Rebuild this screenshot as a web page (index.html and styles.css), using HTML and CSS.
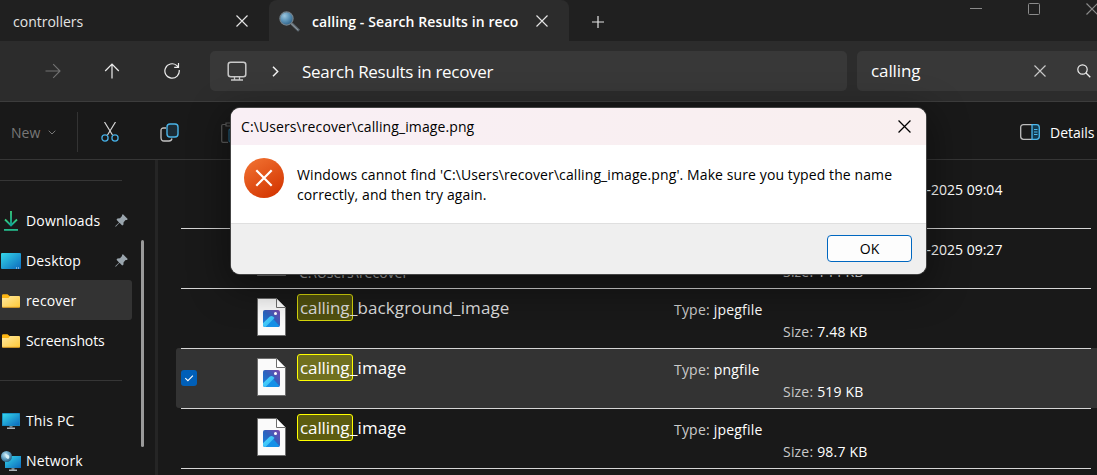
FILE: index.html
```html
<!DOCTYPE html>
<html lang="en">
<head>
<meta charset="utf-8">
<title>calling - Search Results in recover</title>
<link rel="stylesheet" href="styles.css">
</head>
<body>
<svg class="defs" width="0" height="0" aria-hidden="true">
  <defs>
    <linearGradient id="screen" x1="0" y1="0" x2="1" y2="1"><stop offset="0" stop-color="#35d7ea"/><stop offset="1" stop-color="#0c69bd"/></linearGradient>
    <linearGradient id="folder" x1="0" y1="0" x2="1" y2="1"><stop offset="0" stop-color="#ffe9a0"/><stop offset="1" stop-color="#ffc938"/></linearGradient>
    <linearGradient id="down" x1="0" y1="0" x2="0" y2="1"><stop offset="0" stop-color="#3ad17e"/><stop offset="1" stop-color="#10a596"/></linearGradient>
    <linearGradient id="photo" x1="0" y1="1" x2="1" y2="0"><stop offset="0" stop-color="#1482de"/><stop offset=".5" stop-color="#2d62bd"/><stop offset="1" stop-color="#7a48ac"/></linearGradient>
    <linearGradient id="hill" x1="0" y1="0" x2="1" y2="1"><stop offset="0" stop-color="#4fd8ff"/><stop offset="1" stop-color="#2fb4f2"/></linearGradient>
    <linearGradient id="error" x1=".2" y1="0" x2=".8" y2="1"><stop offset="0" stop-color="#f07030"/><stop offset="1" stop-color="#d33400"/></linearGradient>
    <radialGradient id="globe" cx=".4" cy=".35" r=".65"><stop offset="0" stop-color="#c5e5f2"/><stop offset=".5" stop-color="#6ba8c8"/><stop offset="1" stop-color="#2b6488"/></radialGradient>
    <radialGradient id="glass" cx=".35" cy=".3" r=".75"><stop offset="0" stop-color="#9cc6de"/><stop offset=".5" stop-color="#5d94b8"/><stop offset="1" stop-color="#2c5f86"/></radialGradient>
    <symbol id="i-page" viewBox="0 0 29 38">
      <path d="M.5.5h19l9 9v28H.5z" fill="#fafafa" stroke="#6d6d6d"/>
      <path d="M19.5.5v9h9" fill="#fff" stroke="#6d6d6d"/>
      <rect x="6" y="12" width="17" height="17" rx="2" fill="url(#photo)"/>
      <path d="M6.500 28 13.200 20.600q1.300-1.300 2.600 0L22.500 28q-.6 1-2.500 1H9q-1.500 0-2.500-1z" fill="#1390e8"/>
      <path d="M6 25.200 12.600 18.800q1.900-1.500 3.700 0l1.200 1.200L8.500 29H8q-2 0-2-2z" fill="url(#hill)"/>
      <circle cx="18.500" cy="15.500" r="1.500" fill="#fff"/>
    </symbol>
    <symbol id="i-folder" viewBox="0 0 18 14">
      <path d="M0 1.500Q0 .2 1.300.2h4.200L7.600 2H16v4H0z" fill="#fdb614"/>
      <path d="M0 4h6.500l1.700-1.900H17q1 0 1 1V12.500q0 1-1 1H1q-1 0-1-1z" fill="url(#folder)"/>
      <path d="M.3 13.300h17.400" stroke="#e7a01d" stroke-width=".8"/>
    </symbol>
    <symbol id="i-pin" viewBox="0 0 13 13">
      <path d="M8 .3 12.700 5l-.7.900-1.400.1-2 2.200-.2 2.500-1.200.8-2.700-2.700L1 12.600l-.7.100.1-.8 3.700-3.500L1.500 5.800l.9-1.300 2.600-.2 2-2.200.1-1.300z" fill="#9aa5ad"/>
    </symbol>
    <symbol id="i-x" viewBox="0 0 12 12"><path d="M.5.5l11 11M11.500.5l-11 11" fill="none" stroke="currentColor" stroke-width="1.150"/></symbol>
    <symbol id="i-pc" viewBox="0 0 18 16">
      <rect width="18" height="13" rx=".6" fill="#1586bd"/><rect x=".8" y=".8" width="16.400" height="11.400" fill="url(#screen)"/><path d="M7.500 13h3v1.500h-3z" fill="#77838a"/><path d="M5 14.500h8V16H5z" fill="#aab2b8"/>
    </symbol>
  </defs>
</svg>

<div class="window">
  <header class="tabs">
    <div class="tab">
      <span class="tab-title">controllers</span>
      <svg class="tab-close" width="12" height="12"><use href="#i-x"/></svg>
    </div>
    <div class="tab tab-active">
      <svg class="lens" width="21" height="21" viewBox="0 0 21 21"><path d="M12.500 12.500 20 19.700" stroke="#626d75" stroke-width="2.700"/><path d="M12 12.500l7 6.500" stroke="#9ba5ac" stroke-width=".8"/><circle cx="7.500" cy="7.500" r="6.600" fill="url(#glass)" stroke="#73828c" stroke-width="1.200"/></svg>
      <span class="tab-title tab-title-active">calling - Search Results in reco</span>
      <svg class="tab-close" width="12" height="12"><use href="#i-x"/></svg>
    </div>
    <svg class="tab-add" width="12" height="12" viewBox="0 0 12 12"><path d="M6 0v12M0 6h12" stroke="#e4e4e4" stroke-width="1.200"/></svg>
    <div class="caption">
      <svg width="12" height="12" viewBox="0 0 12 12"><path d="M0 5.500h12" stroke="#8b8b8b"/></svg>
      <svg width="12" height="12" viewBox="0 0 12 12"><rect x=".5" y=".5" width="11" height="11" rx="1" fill="none" stroke="#8b8b8b"/></svg>
      <svg width="12" height="12"><use href="#i-x"/></svg>
    </div>
  </header>

  <nav class="nav">
    <svg class="nav-forward" width="16" height="16" viewBox="0 0 16 16"><path d="M.5 8h14.500M8.200 1.200 15 8l-6.800 6.800" fill="none" stroke="#727272" stroke-width="1.100"/></svg>
    <svg class="nav-up" width="16" height="16" viewBox="0 0 16 16"><path d="M8 15.500V1.200M1.200 8 8 1.200 14.800 8" fill="none" stroke="#ededed" stroke-width="1.200"/></svg>
    <svg class="nav-refresh" width="16" height="16" viewBox="0 0 16 16"><path d="M15.200 7A7.200 7.200 0 1 1 12.600 2.400L14.300 4M14.500 0v4.300h-4.300" fill="none" stroke="#ededed" stroke-width="1.200"/></svg>
    <div class="address">
      <svg width="20" height="20" viewBox="0 0 20 20"><rect x="1.200" y="1.200" width="17.600" height="14.600" rx="2.500" fill="none" stroke="#c9c9c9" stroke-width="1.500"/><path d="M7.500 16v2.500M12.500 16v2.500M4 19h12" fill="none" stroke="#c9c9c9" stroke-width="1.300"/></svg>
      <svg class="chevron" width="7" height="11" viewBox="0 0 7 11"><path d="M1 .8 5.700 5.500 1 10.200" fill="none" stroke="#f0f0f0" stroke-width="1.500"/></svg>
      <span class="address-text">Search Results in recover</span>
    </div>
    <div class="search">
      <span class="search-text">calling</span>
      <svg class="search-clear" width="12" height="12"><use href="#i-x"/></svg>
      <svg width="14" height="14" viewBox="0 0 14 14"><circle cx="5.500" cy="5.500" r="4.700" fill="none" stroke="#ededed" stroke-width="1.200"/><path d="M9 9l4.300 4.300" stroke="#ededed" stroke-width="1.300"/></svg>
    </div>
  </nav>

  <div class="toolbar">
    <div class="new"><span>New</span><svg width="8" height="5" viewBox="0 0 8 5"><path d="M.7.7 4 4 7.300.7" fill="none" stroke="#777"/></svg></div>
    <svg class="cut" width="18" height="20" viewBox="0 0 18 20"><path d="M3.500 0l8 13M14.500 0l-8 13" stroke="#d6d6d6" stroke-width="1.200"/><circle cx="4" cy="16" r="3.100" fill="none" stroke="#46ade2" stroke-width="1.300"/><circle cx="14" cy="16" r="3.100" fill="none" stroke="#46ade2" stroke-width="1.300"/></svg>
    <svg class="copy" width="19" height="19" viewBox="0 0 19 19"><path d="M6 5H3.500Q1 5 1 7.500v7Q1 18 4 18h5q2.500 0 3-2.500" fill="none" stroke="#c4c4c4" stroke-width="1.300"/><rect x="7" y="1" width="11" height="13" rx="3" fill="#1b2b35" stroke="#4ab4e8" stroke-width="1.400"/></svg>
    <svg class="paste" width="18" height="21" viewBox="0 0 18 21"><path d="M5 2.500H2Q.7 2.500.7 4v15q0 1.300 1.300 1.300h5M5 1h7v3H5z" fill="none" stroke="#5a5a5a" stroke-width="1.200"/><rect x="8" y="7" width="9" height="13" rx="2" fill="none" stroke="#235a78" stroke-width="1.300"/></svg>
    <div class="details">
      <svg width="20" height="16" viewBox="0 0 20 16"><path d="M12 .7H3.500Q.7.700.7 3.500v9q0 2.800 2.800 2.800H12" fill="none" stroke="#bdbdbd" stroke-width="1.300"/><path d="M12 .7h4.500q2.800 0 2.800 2.800v9q0 2.800-2.800 2.800H12z" fill="#123b50" stroke="#4cb9ee" stroke-width="1.300"/><path d="M14 5.500h3.500M14 8h3.500M14 10.500h3.500" stroke="#4cb9ee"/></svg>
      <span>Details</span>
    </div>
  </div>

  <main class="body">
    <aside class="sidebar">
      <div class="places">
        <div class="rule"></div>
        <div class="place"><svg width="20" height="20" viewBox="0 0 20 20"><path d="M5 8.500l6 6 6-6" fill="none" stroke="url(#down)" stroke-width="1.800"/><path d="M10.100 0h1.800v14h-1.800z" fill="url(#down)"/><path d="M4 18.900h14" stroke="#24b98b" stroke-width="1.800"/></svg><span>Downloads</span><svg width="13" height="13"><use href="#i-pin"/></svg></div>
        <div class="place"><svg width="21" height="16" viewBox="0 0 21 16"><rect x="1" width="20" height="16" rx="1" fill="url(#screen)"/><path d="M16 15h1M18 15h1" stroke="#d9edf9"/></svg><span>Desktop</span><svg width="13" height="13"><use href="#i-pin"/></svg></div>
        <div class="place place-current"><svg class="small" width="18" height="14"><use href="#i-folder"/></svg><span>recover</span></div>
        <div class="place place-tight"><svg class="small" width="18" height="14"><use href="#i-folder"/></svg><span>Screenshots</span></div>
        <div class="rule"></div>
        <div class="place"><svg class="small" width="18" height="16"><use href="#i-pc"/></svg><span>This PC</span></div>
        <div class="place"><svg width="21" height="20" viewBox="-1 0 21 20"><rect x="4" y="5" width="16" height="12" fill="url(#screen)"/><path d="M10.500 17h3v2h-3z" fill="#77838a"/><path d="M8 18.500h8V20H8z" fill="#aab2b8"/><circle cx="5.500" cy="5.500" r="5.500" fill="url(#globe)"/><path d="M3 2q2 .5 1.500 2.500T7 8q2-1 1-3.500" fill="#d8f0f7"/></svg><span>Network</span></div>
      </div>
      <div class="scrollbar"></div>
    </aside>

    <section class="files">
      <div class="file file-first"><div class="meta meta-date">02-07-2025 09:04</div></div>
      <div class="file">
        <svg class="page" width="29" height="38"><use href="#i-page"/></svg>
        <div class="name"><div class="path">C:\Users\recover</div></div>
        <div class="meta"><p><i>Type:</i> jpegfile</p><p class="size"><i>Size:</i> 144 KB</p></div>
        <div class="meta meta-date">02-07-2025 09:27</div>
      </div>
      <div class="file file-shaded">
        <svg class="page" width="29" height="38"><use href="#i-page"/></svg>
        <div class="name"><mark>calling</mark>_background_image</div>
        <div class="meta"><p><i>Type:</i> jpegfile</p><p class="size"><i>Size:</i> 7.48 KB</p></div>
      </div>
      <div class="file file-selected">
        <svg class="check" width="16" height="16" viewBox="0 0 16 16"><rect width="16" height="16" rx="3" fill="#005fb8"/><path d="M4.300 8.200 6.900 10.700 11.900 5.700" fill="none" stroke="#fff" stroke-width="1.100"/></svg>
        <svg class="page" width="29" height="38"><use href="#i-page"/></svg>
        <div class="name"><mark>calling</mark>_image</div>
        <div class="meta"><p><i>Type:</i> pngfile</p><p class="size"><i>Size:</i> 519 KB</p></div>
      </div>
      <div class="file">
        <svg class="page" width="29" height="38"><use href="#i-page"/></svg>
        <div class="name"><mark>calling</mark>_image</div>
        <div class="meta"><p><i>Type:</i> jpegfile</p><p class="size"><i>Size:</i> 98.7 KB</p></div>
      </div>
      <div class="file"></div>
    </section>
  </main>
</div>

<div class="dialog" role="alertdialog">
  <div class="dialog-title"><span>C:\Users\recover\calling_image.png</span><svg width="13" height="13"><use href="#i-x"/></svg></div>
  <div class="dialog-body">
    <svg width="40" height="40" viewBox="0 0 40 40"><circle cx="20" cy="20" r="20" fill="url(#error)"/><path d="M12.300 12.300l15.400 15.400M27.700 12.300 12.300 27.700" stroke="#fff" stroke-width="2.200"/></svg>
    <p>Windows cannot find 'C:\Users\recover\calling_image.png'. Make sure you typed the name<br>correctly, and then try again.</p>
  </div>
  <div class="dialog-foot"><button class="ok">OK</button></div>
</div>
</body>
</html>
```
FILE: styles.css
```css
* { box-sizing: border-box; }
body { margin: 0; width: 1097px; height: 475px; overflow: hidden; background: #191919; color: #fff; font: 14px/20px "Open Sans", "Noto Sans", sans-serif; }
svg { display: block; flex: none; }
p { margin: 0; }
.defs { position: absolute; }
.window { display: flex; flex-direction: column; height: 475px; }

.tabs { display: flex; height: 41px; flex: none; background: #202020; color: #e4e4e4; }
.tab { display: flex; align-items: center; width: 269px; padding: 1px 21px 0 13px; border-radius: 0 0 6px 0; white-space: nowrap; }
.tab-title { flex: 1; padding-top: 2px; font-size: 14px; overflow: hidden; }
.tab-active { width: 300px; padding: 1px 21px 0 10px; background: #2c2c2c; border-radius: 8px 8px 0 0; }
.tab-title-active { margin-left: 12px; font-weight: 600; color: #fff; letter-spacing: 0.1px; }
.tab-add { margin: 16px 0 0 23px; }
.caption { display: flex; gap: 46px; margin: 3px -1px 0 auto; color: #8b8b8b; }

.nav { display: flex; align-items: center; height: 61px; flex: none; padding-left: 45px; background: #2c2c2c; border-bottom: 1px solid #3c3c3c; overflow: hidden; }
.nav-up { margin-left: 43px; }
.nav-refresh { margin-left: 44px; }
.address { display: flex; flex: none; align-items: center; width: 637px; height: 40px; margin-left: 30px; padding-left: 17px; border-radius: 5px; background: #383838; }
.chevron { margin-left: 25px; }
.address-text { margin-left: 23px; padding-top: 1px; font-size: 17px; letter-spacing: -0.3px; }
.search { display: flex; flex: none; align-items: center; width: 245px; height: 40px; margin-left: 10px; padding-left: 14px; border-radius: 5px; background: #383838; }
.search-text { font-size: 17px; width: 163px; letter-spacing: -0.1px; }
.search-clear { margin-right: 31px; color: #c8c8c8; }

.toolbar { display: flex; align-items: center; height: 58px; flex: none; padding: 3px 0 0 11px; background: #191919; border-bottom: 1px solid #363636; }
.new { display: flex; align-items: center; gap: 8px; width: 67px; height: 40px; border-right: 1px solid #333; color: #777; font-size: 14px; }
.new span, .details span { padding-top: 1px; }
.cut { margin-left: 23px; }
.copy { margin-left: 41px; }
.paste { margin-left: 42px; }
.details { display: flex; align-items: center; gap: 10px; margin-left: auto; width: 77px; letter-spacing: 0; }

.body { display: flex; flex: 1; min-height: 0; overflow: hidden; }
.sidebar { display: flex; width: 158px; flex: none; border-right: 3px solid #252525; }
.places { width: 132px; flex: none; }
.rule { width: 122px; height: 21px; margin-bottom: 19px; border-bottom: 1px solid #363636; }
.place { display: grid; grid-template-columns: 26px 1fr auto; align-items: center; height: 40px; padding: 1px 4px 0 0; letter-spacing: 0.15px; }
.place-tight { letter-spacing: -0.1px; }
.small { margin-left: 2px; }
.place-current { background: #333; border-radius: 0 3px 3px 0; }
.scrollbar { width: 3px; height: 207px; margin: 80px 0 0 9px; border-radius: 2px; background: #9a9a9a; }

.files { flex: 1; padding-left: 18px; min-width: 0; }
.file { position: relative; display: flex; height: 60px; }
.file::before { content: ""; position: absolute; left: 5px; right: 6px; top: 0; border-top: 1px solid #d6d6d6; }
.file-first { height: 68px; padding-top: 8px; }
.file-first::before { display: none; }
.file-selected { background: #333; border-radius: 3px 0 0 3px; }
.check { margin: 22px -21px 0 5px; }
.page { margin: 10px 0 0 81px; }
.name { width: 377px; flex: none; margin-left: 11px; padding-top: 6px; font-size: 17px; line-height: 26px; letter-spacing: 0.1px; white-space: nowrap; }
.name mark { display: inline-block; height: 27px; width: 56px; margin-right: -3px; border: 1px solid #ff0; border-radius: 3px; background: #5c5c10; color: #fff; padding-left: 2px; line-height: 26px; letter-spacing: -0.1px; }
.file-selected mark { background: #70701f; }
.file-shaded mark { background: #50500f; border-color: #d6d60c; }
.file-shaded .name, .file-shaded mark { color: #dcdcdc; }
.path { padding: 26px 0 0 2px; font-size: 14px; color: #aaa; letter-spacing: 0; }
.meta { width: 232px; flex: none; padding-top: 11px; line-height: 22px; letter-spacing: 0.2px; }
.meta i { font-style: normal; color: #cacaca; }
.size { padding-left: 109px; }
.meta-date { margin-left: -16px; padding-top: 11px; letter-spacing: 0; white-space: nowrap; }
.file-first .meta-date { margin-left: 714px; }

.dialog { position: absolute; left: 231px; top: 108px; width: 695px; height: 166px; border-radius: 9px; overflow: hidden; background: #fff; color: #000; box-shadow: 0 0 0 1px #444, 0 10px 36px 6px rgba(0,0,0,.38); }
.dialog-title { display: flex; align-items: center; justify-content: space-between; height: 37px; padding: 0 15px 0 10px; letter-spacing: 0.1px; background: linear-gradient(90deg, #f9eff5, #f9efef); }
.dialog-body { display: flex; height: 78px; padding: 13px 13px 0; }
.dialog-body p { margin: 7px 0 0 13px; letter-spacing: 0.1px; white-space: nowrap; }
.dialog-foot { display: flex; justify-content: flex-end; height: 51px; padding: 11px 14px 0 0; border-top: 1px solid #dfdfdf; background: #efefef; }
.ok { width: 85px; height: 27px; padding: 0; border: 1px solid #0067c0; border-radius: 4px; background: #fdfdfd; color: #000; font: inherit; }
```
